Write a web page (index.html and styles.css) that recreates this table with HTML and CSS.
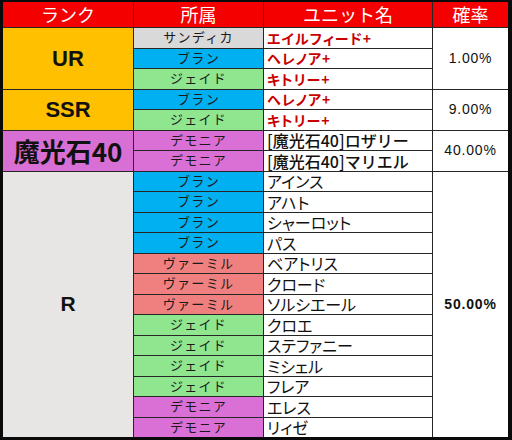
FILE: index.html
```html
<!DOCTYPE html>
<html lang="ja">
<head>
<meta charset="utf-8">
<title>排出率</title>
<link rel="stylesheet" href="styles.css">
</head>
<body>
<div class="sheet">
  <div class="hd">ランク</div>
  <div class="hd">所属</div>
  <div class="hd">ユニット名</div>
  <div class="hd">確率</div>

  <div class="rank ur span3">UR</div>
  <div class="aff sand">サンディカ</div>
  <div class="name hot">エイルフィード+</div>
  <div class="rate span3">1.00%</div>
  <div class="aff blan">ブラン</div>
  <div class="name hot">ヘレノア+</div>
  <div class="aff jade">ジェイド</div>
  <div class="name hot">キトリー+</div>

  <div class="rank ur span2">SSR</div>
  <div class="aff blan">ブラン</div>
  <div class="name hot">ヘレノア+</div>
  <div class="rate span2">9.00%</div>
  <div class="aff jade">ジェイド</div>
  <div class="name hot">キトリー+</div>

  <div class="rank mk span2">魔光石40</div>
  <div class="aff demo">デモニア</div>
  <div class="name mkn">[魔光石40]ロザリー</div>
  <div class="rate span2">40.00%</div>
  <div class="aff demo">デモニア</div>
  <div class="name mkn">[魔光石40]マリエル</div>

  <div class="rank r span13">R</div>
  <div class="aff blan">ブラン</div>
  <div class="name">アインス</div>
  <div class="rate span13 bold">50.00%</div>
  <div class="aff blan">ブラン</div>
  <div class="name">アハト</div>
  <div class="aff blan">ブラン</div>
  <div class="name">シャーロット</div>
  <div class="aff blan">ブラン</div>
  <div class="name">パス</div>
  <div class="aff verm">ヴァーミル</div>
  <div class="name">ベアトリス</div>
  <div class="aff verm">ヴァーミル</div>
  <div class="name">クロード</div>
  <div class="aff verm">ヴァーミル</div>
  <div class="name">ソルシエール</div>
  <div class="aff jade">ジェイド</div>
  <div class="name">クロエ</div>
  <div class="aff jade">ジェイド</div>
  <div class="name">ステファニー</div>
  <div class="aff jade">ジェイド</div>
  <div class="name">ミシェル</div>
  <div class="aff jade">ジェイド</div>
  <div class="name">フレア</div>
  <div class="aff demo">デモニア</div>
  <div class="name">エレス</div>
  <div class="aff demo">デモニア</div>
  <div class="name">リィゼ</div>
</div>
</body>
</html>
```
FILE: styles.css
```css
html, body {
  margin: 0;
  padding: 0;
  background: #0a0a0a;
}
body {
  width: 512px;
  height: 440px;
  overflow: hidden;
  font-family: "Noto Sans CJK JP", "Liberation Sans", sans-serif;
}
.sheet {
  margin: 2px 4px 0 3px;
  width: 505px;
  display: grid;
  grid-template-columns: 130px 129px 168px 75px;
  grid-template-rows: 25px repeat(20, 19.5px);
  gap: 1px;
  background: #262626;
}
.sheet > div {
  display: flex;
  align-items: center;
  justify-content: center;
  white-space: nowrap;
  line-height: 1.15;
}
.hd {
  background: #f50000;
  color: #fff;
  font-size: 18px;
}
.span2 { grid-row: span 2; }
.span3 { grid-row: span 3; }
.span13 { grid-row: span 13; }

.rank {
  font-family: "Liberation Sans", "Noto Sans CJK JP", sans-serif;
  font-weight: bold;
  font-size: 22px;
  color: #111;
}
.ur { background: #ffc000; }
.mk {
  background: #d86fd4;
  font-family: "Noto Sans CJK JP", sans-serif;
  font-size: 26px;
}
.r { background: #e8e6e5; font-size: 21px; }

.aff {
  font-size: 13px;
  letter-spacing: 1.3px;
  color: #1a1a1a;
}
.sand { background: #d9d9d9; }
.blan { background: #00b0f0; }
.jade { background: #90e68f; }
.verm { background: #f08080; }
.demo { background: #da70d6; }

.sheet > .name {
  background: #fff;
  justify-content: flex-start;
  padding-left: 3px;
  font-size: 16px;
  font-feature-settings: "palt";
  color: #111;
}
.sheet > .hot {
  color: #c80000;
  font-weight: bold;
  font-size: 14px;
  letter-spacing: 1px;
}
.sheet > .mkn {
  font-weight: 500;
  font-size: 16px;
  font-feature-settings: normal;
}
.rate {
  background: #fff;
  font-family: "Liberation Sans", sans-serif;
  font-size: 14px;
  letter-spacing: 0.8px;
  color: #111;
}
.bold { font-weight: bold; }
```
